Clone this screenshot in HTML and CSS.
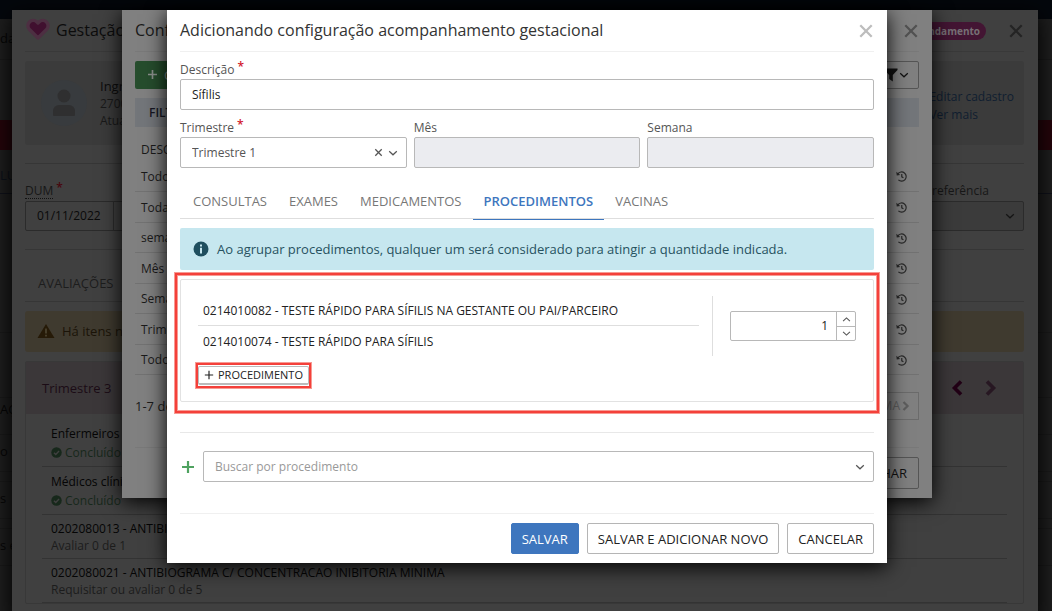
FILE: index.html
```html
<!DOCTYPE html>
<html lang="pt-BR">
<head>
<meta charset="utf-8">
<meta name="viewport" content="width=device-width, initial-scale=1">
<title>Acompanhamento gestacional</title>
<link rel="stylesheet" href="styles.css">
</head>
<body>
<svg class="sprite" aria-hidden="true">
  <symbol id="i-close" viewBox="0 0 14 14"><path d="M2 2l10 10M12 2L2 12" fill="none" stroke="currentColor" stroke-width="2"/></symbol>
  <symbol id="i-chevron" viewBox="0 0 10 10"><path d="M1.200 3.200L5 6.800l3.800-3.600" fill="none" stroke="currentColor" stroke-width="1.200"/></symbol>
  <symbol id="i-up" viewBox="0 0 10 10"><path d="M1.200 6.800L5 3.200l3.800 3.600" fill="none" stroke="currentColor" stroke-width="1.200"/></symbol>
  <symbol id="i-plus" viewBox="0 0 12 12"><path d="M6 0v12M0 6h12" fill="none" stroke="currentColor" stroke-width="2.200"/></symbol>
  <symbol id="i-plus-thin" viewBox="0 0 12 12"><path d="M6 1v10M1 6h10" fill="none" stroke="currentColor" stroke-width="1.400"/></symbol>
  <symbol id="i-history" viewBox="0 0 12 12"><path d="M2 3.200a5 5 0 1 1 .6 6.400M6.300 3.400v3l1.800 1" fill="none" stroke="currentColor" stroke-width="1.300"/><path d="M.3.800l.5 4.200 3.800-.700z" fill="currentColor"/></symbol>
  <symbol id="i-check" viewBox="0 0 12 12"><circle cx="6" cy="6" r="5.700" fill="currentColor"/><path d="M3.200 6.200l2 2 3.600-3.800" fill="none" stroke="#404040" stroke-width="1.500"/></symbol>
  <symbol id="i-angle" viewBox="0 0 12 16"><path d="M2 1.500L8.500 8 2 14.500" fill="none" stroke="currentColor" stroke-width="3.600"/></symbol>
</svg>

<div class="page">
  <header class="topbar"></header>
  <div class="band band-title">da</div>
  <div class="band band-space"></div>
  <div class="band band-alert"></div>
  <div class="band band-tabs">LU</div>
  <div class="band band-tall"></div>
  <div class="band band-mid"></div>
  <div class="band band-row band-first">AÇÃ</div>
  <div class="band band-row">o</div>
  <div class="band band-gap"></div>
  <div class="band band-row">s</div>
  <div class="band band-gap"></div>
  <div class="band band-row">s e</div>
</div>

<section class="modal record" aria-label="Gestação">
  <header class="modal-head">
    <svg class="heart" viewBox="0 0 24 22" aria-hidden="true"><path d="M12 20L3.500 11.500a5.200 5.200 0 0 1 0-7.500 5.200 5.200 0 0 1 7.500 0l1 1 1-1a5.200 5.200 0 0 1 7.500 0 5.200 5.200 0 0 1 0 7.500z" fill="#40102f" stroke="#4d2f42" stroke-width="3.400" stroke-linejoin="round"/></svg>
    <h1 class="modal-title">Gestação</h1>
    <span class="pill">Em andamento</span>
    <button class="close" aria-label="Fechar gestação"><svg><use href="#i-close"/></svg></button>
  </header>
  <div class="citizen">
    <span class="avatar"><svg viewBox="0 0 24 28" aria-hidden="true"><circle cx="12" cy="7" r="6.500"/><path d="M1 26v-4a6 6 0 0 1 6-6h10a6 6 0 0 1 6 6v4q0 1-1 1H2q-1 0-1-1z"/></svg></span>
    <div class="citizen-data"><strong>Ingr</strong><span>2700</span><span>Atua</span></div>
    <nav class="citizen-links"><a href="#">Editar cadastro</a><a href="#">Ver mais</a></nav>
  </div>
  <div class="record-form">
    <div class="record-field">
      <label for="dum"><span class="dotted">DUM</span><span class="req">*</span></label>
      <div class="date"><input id="dum" value="01/11/2022"><span></span></div>
    </div>
    <div class="record-field reference">
      <label for="ref">referência</label>
      <div class="pick"><select id="ref"><option></option></select><svg><use href="#i-chevron"/></svg></div>
    </div>
  </div>
  <h2 class="record-tab">AVALIAÇÕES</h2>
  <div class="warning"><svg viewBox="0 0 18 16" aria-hidden="true"><path d="M9 1L17.500 15H.5z" fill="#261a07"/><path d="M9 5.500v5M9 11.800v1.700" stroke="#4f4733" stroke-width="1.600"/></svg>Há itens n</div>
  <div class="term">
    <div class="term-head"><h3>Trimestre 3</h3>
      <button class="prev" aria-label="Anterior"><svg><use href="#i-angle"/></svg></button>
      <button class="next" aria-label="Próximo"><svg><use href="#i-angle"/></svg></button></div>
    <ul class="term-list">
      <li class="large"><b>Enfermeiros c</b><span class="done"><svg><use href="#i-check"/></svg>Concluído</span></li>
      <li class="large"><b>Médicos clíni</b><span class="done"><svg><use href="#i-check"/></svg>Concluído</span></li>
      <li><b>0202080013 - ANTIBIO</b><span>Avaliar 0 de 1</span></li>
      <li><b>0202080021 - ANTIBIOGRAMA C/ CONCENTRACAO INIBITORIA MINIMA</b><span>Requisitar ou avaliar 0 de 5</span></li>
    </ul>
  </div>
</section>

<section class="modal settings" aria-label="Configurações">
  <header class="modal-head"><h1 class="modal-title">Conf</h1><button class="close" aria-label="Fechar configurações"><svg><use href="#i-close"/></svg></button></header>
  <div class="settings-tools">
    <button class="add"><svg><use href="#i-plus"/></svg>C</button>
    <button class="filter" aria-label="Filtrar"><svg class="funnel" viewBox="0 0 14 14"><path d="M.500.500h13v1.500L8.800 7v6.500L5.200 11V7L.500 2z" fill="currentColor"/></svg><svg class="small"><use href="#i-chevron"/></svg></button>
  </div>
  <div class="filter-bar">FILT</div>
  <table class="settings-table">
    <thead><tr><th>DESC</th><th></th></tr></thead>
    <tbody>
      <tr><td>Todo</td><td><svg><use href="#i-history"/></svg></td></tr>
      <tr><td>Toda</td><td><svg><use href="#i-history"/></svg></td></tr>
      <tr><td>sema</td><td><svg><use href="#i-history"/></svg></td></tr>
      <tr><td>Mês</td><td><svg><use href="#i-history"/></svg></td></tr>
      <tr><td>Sema</td><td><svg><use href="#i-history"/></svg></td></tr>
      <tr><td>Trime</td><td><svg><use href="#i-history"/></svg></td></tr>
      <tr><td>Todo</td><td><svg><use href="#i-history"/></svg></td></tr>
    </tbody>
  </table>
  <div class="pager"><span>1-7 de</span><button disabled>MA<svg><use href="#i-angle"/></svg></button></div>
  <footer class="settings-foot"><button class="btn">FECHAR</button></footer>
</section>

<section class="modal editor" role="dialog" aria-labelledby="editor-title">
  <header class="modal-head"><h1 class="modal-title" id="editor-title">Adicionando configuração acompanhamento gestacional</h1><button class="close" aria-label="Fechar"><svg><use href="#i-close"/></svg></button></header>
  <form class="editor-form">
    <div class="field"><label for="desc">Descrição<span class="req">*</span></label><input id="desc" type="text" value="Sífilis"></div>
    <div class="field-row">
      <div class="field"><label for="tri">Trimestre<span class="req">*</span></label>
        <div class="pick"><select id="tri"><option>Trimestre 1</option></select><button type="button" class="clear" aria-label="Limpar"><svg><use href="#i-close"/></svg></button><svg><use href="#i-chevron"/></svg></div></div>
      <div class="field"><label for="mes">Mês</label><input id="mes" type="text" disabled></div>
      <div class="field"><label for="sem">Semana</label><input id="sem" type="text" disabled></div>
    </div>
    <div class="tabs" role="tablist">
      <button type="button" role="tab">CONSULTAS</button><button type="button" role="tab">EXAMES</button><button type="button" role="tab">MEDICAMENTOS</button><button type="button" role="tab" aria-selected="true">PROCEDIMENTOS</button><button type="button" role="tab">VACINAS</button>
    </div>
    <p class="info"><svg viewBox="0 0 16 16" aria-hidden="true"><circle cx="8" cy="8" r="7.500" fill="#1f4f5f"/><path d="M7 3.500h2v2H7zM7 6.800h2v5.700H7z" fill="#c6e7ef"/></svg>Ao agrupar procedimentos, qualquer um será considerado para atingir a quantidade indicada.</p>
    <div class="group">
      <div class="group-items">
        <ul><li>0214010082 - TESTE RÁPIDO PARA SÍFILIS NA GESTANTE OU PAI/PARCEIRO</li><li>0214010074 - TESTE RÁPIDO PARA SÍFILIS</li></ul>
        <button type="button" class="add-proc"><svg><use href="#i-plus-thin"/></svg>PROCEDIMENTO</button>
      </div>
      <div class="amount">
        <div class="number"><input type="text" value="1" aria-label="Quantidade"><div class="steps"><button type="button" aria-label="Aumentar"><svg><use href="#i-up"/></svg></button><button type="button" aria-label="Diminuir"><svg><use href="#i-chevron"/></svg></button></div></div>
      </div>
    </div>
    <div class="search"><svg class="search-plus"><use href="#i-plus"/></svg>
      <div class="pick"><input type="text" role="combobox" aria-expanded="false" aria-label="Buscar por procedimento" placeholder="Buscar por procedimento"><svg><use href="#i-chevron"/></svg></div></div>
    <footer class="editor-foot"><button type="button" class="btn primary">SALVAR</button><button type="button" class="btn">SALVAR E ADICIONAR NOVO</button><button type="button" class="btn">CANCELAR</button></footer>
  </form>
</section>
</body>
</html>
```
FILE: styles.css
```css
* { box-sizing: border-box; }
html, body { height: 100%; }
body { margin: 0; overflow: hidden; position: relative; background: #1e1e1e; color: #333; font: 12px/16px "Open Sans", sans-serif; }
h1, h2, h3, p, ul { margin: 0; padding: 0; font-weight: 400; }
ul { list-style: none; }
button, input, select { font: inherit; color: inherit; margin: 0; }
button { display: inline-flex; align-items: center; justify-content: center; background: none; border: 0; padding: 0; }
svg { flex: none; width: 10px; height: 10px; display: block; }
a { text-decoration: none; }
.sprite { position: absolute; width: 0; height: 0; }

/* page behind the dialogs */
.page { min-height: 100%; color: #060606; font-size: 13px; line-height: 18px; }
.topbar { height: 19px; background: #04070c; }
.band { border-bottom: 1px solid #191919; padding: 10px 0 0; }
.band-title { height: 41px; }
.band-space { height: 60px; border: 0; }
.band-alert { height: 30px; background: #24040a; border: 0; }
.band-tabs { height: 44px; padding-top: 16px; color: #0b1119; border-color: #0f1119; }
.band-tall { height: 139px; }
.band-mid { height: 65px; }
.band-row { height: 37px; padding-top: 7px; }
.band-first { padding-top: 2px; }
.band-gap { height: 10px; padding: 0; }

/* dialogs */
.modal { position: absolute; top: 10px; }
.modal-head { display: flex; align-items: center; height: 42px; border-bottom: 1px solid; }
.modal-title { flex: 1; padding-bottom: 2px; font-size: 16px; line-height: 24px; }
.close svg { width: 16px; height: 16px; }
.req { color: #d2182b; font-size: 12px; font-weight: 600; margin-left: 3px; line-height: 1; }
.pick { position: relative; display: flex; align-items: center; }
.pick select, .pick input { appearance: none; width: 100%; background: none; border-radius: 2px; }
.pick > svg { position: absolute; right: 9px; pointer-events: none; }
.btn { height: 31px; padding: 0 10px; border: 1px solid #b5b5b5; border-radius: 2px; font-size: 13px; white-space: nowrap; }

/* pregnancy record */
.record { left: 12px; right: 14px; min-height: 100%; padding: 0 14px 0 13px; background: #404040; color: #0c0c0c; box-shadow: 0 4px 20px #000; }
.record .modal-head { border-color: #393939; }
.heart { width: 24px; height: 22px; margin: 0 6px 3px 1px; }
.pill { padding: 0 6px; line-height: 18px; border-radius: 9px; background: #431533; color: #777075; font-size: 10px; font-weight: 700; }
.record .close { margin: 0 0 0 22px; color: #242424; }
.citizen { display: flex; align-items: center; height: 84px; margin-top: 9px; padding: 0 10px 0 16px; background: #3b3b3b; border-radius: 3px; }
.avatar { display: flex; align-items: center; justify-content: center; width: 46px; height: 46px; border-radius: 50%; background: #383b3e; }
.avatar svg { width: 24px; height: 28px; fill: #2f2f30; }
.citizen-data { flex: 1; display: grid; margin-left: 13px; line-height: 17px; color: #191919; }
.citizen-data strong { font-size: 13px; font-weight: 400; color: #0c0c0c; }
.citizen-links { display: grid; padding-top: 5px; line-height: 18px; }
.citizen-links a { color: #101e30; }
.record-form { display: flex; justify-content: space-between; height: 87px; margin-top: 18px; padding-top: 18px; border: solid #363636; border-width: 1px 0; }
.record-field { width: 110px; }
.record-field label { display: flex; height: 19px; line-height: 18px; color: #171717; }
.record .req { color: #48060e; }
.dotted { height: 17px; border-bottom: 1px dotted #111; }
.date { display: flex; height: 30px; border: 1px solid #2b2b2b; border-radius: 2px; }
.date input { width: 88px; padding: 0 11px; border: 0; border-right: 1px solid #2b2b2b; background: none; color: #0a0a0a; }
.reference { width: 500px; }
.reference label { padding-left: 408px; }
.reference select { height: 30px; border: 1px solid #2b2b2b; background: #3b3b3b; }
.reference .pick > svg { color: #151515; }
.record-tab { height: 52px; padding: 23px 13px 0; font-size: 13px; line-height: 20px; color: #1d1d1d; border-bottom: 1px solid #363636; }
.warning { display: flex; align-items: center; gap: 7px; height: 41px; margin-top: 9px; padding: 0 12px 2px; border-radius: 3px; background: #3f3a2f; color: #1b1408; font-size: 13px; }
.warning svg { width: 18px; height: 16px; }
.term { margin-top: 9px; border: 1px solid #383838; border-radius: 2px; }
.term-head { display: flex; align-items: center; height: 52px; padding: 0 26px 0 16px; background: #3b3739; }
.term-head h3 { flex: 1; font-size: 13px; color: #1b0c16; }
.term-head svg { width: 12px; height: 16px; }
.prev { color: #210015; transform: rotate(180deg); margin-right: 22px; }
.next { color: #271722; }
.term-list { padding: 0 16px; }
.term-list li { display: grid; align-content: center; height: 44px; padding: 0 9px; border-bottom: 1px solid #333; line-height: 17px; }
.term-list .large { height: 48px; line-height: 19px; }
.term-list .large:first-child { height: 53px; padding-top: 6px; }
.term-list b { font-weight: 400; color: #050505; }
.term-list span { color: #1c1c1c; }
.term-list .done { display: flex; align-items: center; gap: 3px; color: #17281b; }
.done svg { width: 11px; height: 11px; }

/* settings list */
.settings { left: calc(50% - 404px); width: 810px; padding: 0 13px 9px; background: #808080; color: #1a1a1a; box-shadow: 0 4px 20px #000; }
.settings .modal-head { border-color: #797979; }
.settings .close { color: #525252; }
.settings-tools { display: flex; justify-content: space-between; height: 28px; margin-top: 9px; }
.add { gap: 7px; width: 90px; padding-left: 13px; justify-content: flex-start; background: #264d2d; color: #8a8f8b; border-radius: 2px; font-size: 13px; }
.add svg { margin-top: -2px; width: 9px; height: 9px; }
.filter { gap: 1px; width: 64px; padding-right: 9px; justify-content: flex-end; border: 1px solid #555; border-radius: 2px; color: #111; }
.filter .funnel { width: 14px; height: 14px; }
.filter-bar { margin-top: 9px; padding: 0 14px; line-height: 29px; background: #73767a; color: #161622; font-weight: 600; }
.settings-table { width: 100%; border-collapse: collapse; }
.settings-table th { height: 34px; padding: 11px 6px 0; text-align: left; font-weight: 400; }
.settings-table td { height: 30px; padding: 2px 6px 0; border-bottom: 1px solid #727272; }
.settings-table tr:nth-child(even) td { height: 31px; }
.settings-table td:last-child { width: 29px; }
.settings-table td svg { width: 11px; height: 11px; color: #292929; }
.pager { display: flex; align-items: center; justify-content: space-between; height: 73px; padding-bottom: 9px; border-bottom: 1px solid #797979; font-size: 13px; }
.pager button { height: 28px; gap: 2px; width: 74px; padding-right: 8px; justify-content: flex-end; border: 1px solid #6b6b6b; color: #5e5e5e; font-size: 12px; }
.pager svg { width: 8px; height: 10px; }
.settings-foot { display: flex; justify-content: flex-end; padding-top: 9px; }
.settings-foot .btn { height: 32px; padding: 0 11px; border-color: #555; color: #111; }

/* configuration editor */
.editor { left: calc(50% - 359px); width: 720px; padding: 0 13px 9px; background: #fff; box-shadow: 0 4px 20px #000; }
.editor .modal-head { border-color: #f0f0f0; }
.editor .close { color: #bdbdbd; }
.field { flex: 1; min-width: 0; }
.field label { display: flex; height: 18px; line-height: 18px; margin-top: 9px; color: #555; }
.field input, .field select { display: block; width: 100%; height: 31px; padding: 0 11px; border: 1px solid #b8b8b8; border-radius: 2px; background: #fff; color: #222; }
.field select { color: #555; }
.field input:disabled { background: #ebecf0; }
.field-row { display: flex; gap: 7px; }
.editor .field-row .field label { height: 18px; }
.clear { position: absolute; right: 24px; color: #555; }
.clear svg { width: 9px; height: 9px; }
.editor .pick > svg { color: #555; }
.tabs { display: flex; height: 51px; padding: 15px 0 0 2px; border-bottom: 1px solid #dedede; }
.tabs button { height: 37px; padding: 0 11px; font-size: 13px; color: #777; border-bottom: 1px solid transparent; }
.tabs button[aria-selected] { color: #3e76be; font-weight: 600; border-color: #3e76be; }
.info { display: flex; align-items: center; gap: 8px; height: 42px; margin-top: 9px; padding: 0 13px; border-radius: 2px; background: #c6e7ef; color: #27525f; font-size: 13px; }
.info svg { width: 16px; height: 16px; }
.group { position: relative; display: flex; margin-top: 9px; padding: 16px 17px; height: 123px; border: 1px solid #e2e2e2; border-radius: 2px; }
.group::after { content: ""; position: absolute; inset: -8px -7px -13px; border: 1px solid #f79a93; box-shadow: inset 0 0 0 2px #f4403a, inset 0 0 0 3px #f79a93; pointer-events: none; }
.group-items { flex: 1; }
.group-items li { height: 30px; padding: 0 5px; line-height: 29px; color: #222; }
.group-items li:first-child { border-bottom: 1px solid #dedede; }
.group-items li:last-child { line-height: 31px; }
.add-proc { position: relative; gap: 4px; height: 19px; margin-top: 10px; padding: 0 5px; border: 1px solid #bbb; border-bottom-width: 2px; border-radius: 2px; font-size: 11px; color: #222; }
.add-proc::after { content: ""; position: absolute; inset: -5px -4px -6px; border: 1px solid #f79a93; box-shadow: inset 0 0 0 2px #f4403a; }
.amount { display: flex; align-items: center; height: 60px; margin-left: 13px; padding-left: 17px; border-left: 1px solid #dedede; }
.number { display: flex; width: 126px; height: 30px; border: 1px solid #b8b8b8; border-radius: 2px; }
.number input { flex: 1; min-width: 0; padding: 0 8px; border: 0; background: none; text-align: right; color: #222; }
.steps { display: grid; grid-template-rows: 1fr 1fr; width: 19px; border-left: 1px solid #b8b8b8; color: #555; }
.steps button + button { border-top: 1px solid #b8b8b8; }
.steps svg { width: 9px; height: 9px; }
.search { display: flex; align-items: center; gap: 9px; margin-top: 30px; padding: 18px 0 31px 2px; border-top: 1px solid #e8e8e8; }
.search-plus { width: 12px; height: 12px; color: #4fa260; }
.search .pick { flex: 1; }
.search input { height: 31px; padding: 0 11px; border: 1px solid #b8b8b8; }
.search input::placeholder { color: #999; opacity: 1; }
.editor-foot { display: flex; justify-content: flex-end; gap: 8px; padding-top: 9px; border-top: 1px solid #f0f0f0; color: #222; }
.primary { background: #3e76be; border-color: #3e76be; color: #fff; }
```
